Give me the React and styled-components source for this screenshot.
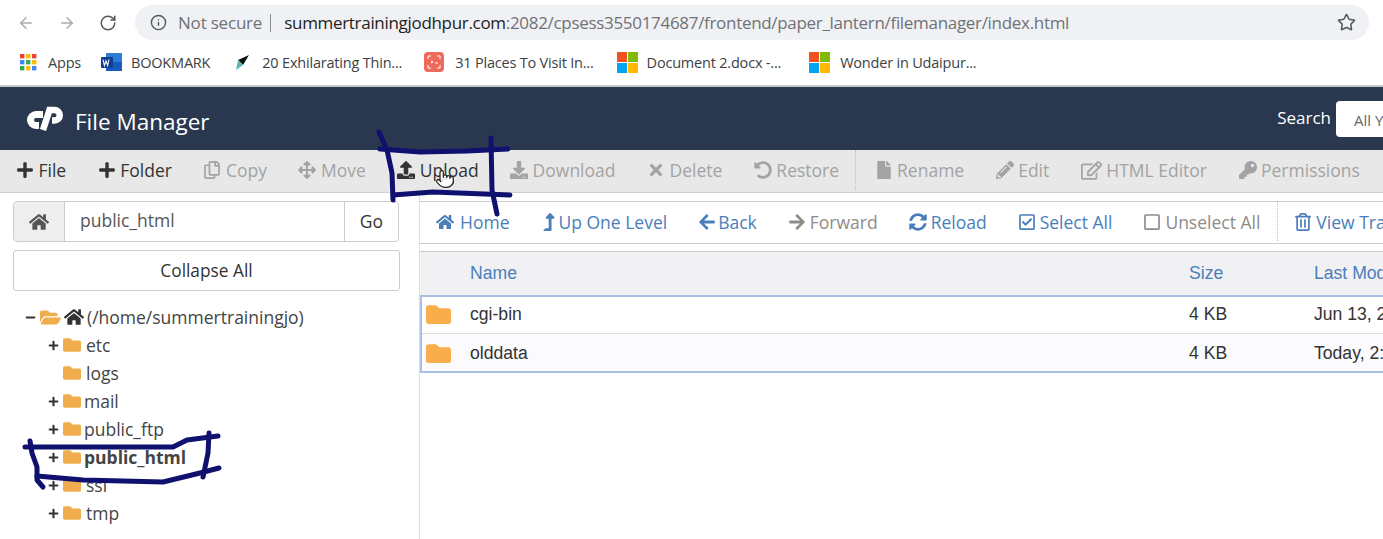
import React from 'react'
import styled, { createGlobalStyle } from 'styled-components';
import {
  FaPlus, FaRegCopy, FaArrowsAlt, FaUpload, FaDownload, FaTimes, FaUndoAlt, FaFile, FaPencilAlt,
  FaRegEdit, FaKey, FaHome, FaLevelUpAlt, FaArrowLeft, FaArrowRight, FaSyncAlt, FaRegCheckSquare,
  FaRegSquare, FaRegTrashAlt, FaFolder, FaFolderOpen, FaMinus
} from 'react-icons/fa';
import { ArrowLeft, ArrowRight, RotateCw, Info, Star, Pointer } from 'lucide-react';

const GlobalStyle = createGlobalStyle`
  html, body {
    margin: 0;
    padding: 0;
    background: #fff;
    overflow: hidden;
  }
`;

const Page = styled.div`
  position: relative;
  width: 1383px;
  height: 539px;
  overflow: hidden;
  font-family: "Open Sans", sans-serif;
  color: #333;
`;

const AddressRow = styled.div`
  display: flex;
  align-items: center;
  height: 35px;
  padding: 5px 14px 5px 17px;
`;

const NavGlyph = styled.span`
  display: flex;
  width: 18px;
  margin-right: ${p => p.$gap}px;
  color: ${p => p.$color};
`;

const AddressBar = styled.div`
  flex: 1;
  display: flex;
  align-items: center;
  height: 35px;
  padding: 0 13px 0 15px;
  border-radius: 18px;
  background: #f0f1f4;
  font-size: 17px;
  color: #6f7276;
`;

const NotSecure = styled.span`
  margin-left: 11px;
  letter-spacing: -0.2px;
`;

const AddressDivider = styled.span`
  width: 1px;
  height: 18px;
  margin: 0 13px 0 8px;
  background: #8a8d91;
`;

const Url = styled.span`
  flex: 1;
  white-space: nowrap;
  letter-spacing: -0.31px;
  b {
    font-weight: 400;
    color: #222;
  }
`;

const BookmarkRow = styled.div`
  display: flex;
  align-items: center;
  height: 42px;
  padding: 0 0 6px 20px;
  border-bottom: 2px solid #c5c8cd;
  box-sizing: border-box;
`;

const Bookmark = styled.div`
  display: flex;
  align-items: center;
  gap: ${p => p.$gap}px;
  margin-right: ${p => p.$right}px;
  font-size: 14.5px;
  white-space: nowrap;
  color: #3c3f43;
  letter-spacing: -0.2px;
`;

const Header = styled.header`
  display: flex;
  align-items: center;
  height: 63px;
  padding: 0 0 0 26px;
  background: #29384f;
  color: #fff;
`;

const Title = styled.h1`
  flex: 1;
  margin: 0 0 0 12px;
  font-size: 22.5px;
  font-weight: 400;
  position: relative;
  top: 3px;
`;

const SearchLabel = styled.span`
  font-size: 17px;
  margin-right: 5px;
  position: relative;
  top: -1px;
`;

const SearchBox = styled.div`
  width: 47px;
  height: 36px;
  margin-top: 1px;
  padding: 9px 0 0 18px;
  box-sizing: border-box;
  background: #fff;
  border-radius: 4px 0 0 4px;
  font-size: 15px;
  color: #666;
  white-space: nowrap;
  overflow: hidden;
`;

const Toolbar = styled.div`
  display: flex;
  align-items: center;
  height: 43px;
  padding: 0 0 2px 16px;
  box-sizing: border-box;
  background: #e8e8e8;
  border-bottom: 1px solid #cfcfcf;
  white-space: nowrap;
  overflow: hidden;
`;

const ToolButton = styled.span`
  display: inline-flex;
  align-items: center;
  gap: 4.5px;
  margin-right: 31.5px;
  font-size: 17.5px;
  color: ${p => (p.$off ? '#a3a3a3' : '#333')};
  svg {
    flex: none;
    font-size: ${p => p.$icon || 18}px;
  }
`;

const ToolDivider = styled.span`
  align-self: stretch;
  width: 0;
  margin: 0 19px 0 -16px;
  border-left: 1px dotted #bbb;
`;

const Main = styled.div`
  display: flex;
  height: 346px;
`;

const Sidebar = styled.aside`
  flex: none;
  width: 420px;
  box-sizing: border-box;
  padding: 8px 19px 0 13px;
  border-right: 1px solid #ddd;
`;

const PathForm = styled.div`
  display: flex;
  align-items: stretch;
  width: 386px;
  height: 41px;
  box-sizing: border-box;
  border: 1px solid #ccc;
  border-radius: 4px;
  font-size: 17.5px;
`;

const PathHome = styled.span`
  display: flex;
  align-items: center;
  justify-content: center;
  width: 50px;
  background: #eee;
  border-right: 1px solid #ccc;
  border-radius: 4px 0 0 4px;
  color: #555;
  font-size: 20px;
`;

const PathInput = styled.span`
  flex: 1;
  padding: 6px 0 0 15px;
  color: #555;
`;

const GoButton = styled.span`
  width: 54px;
  padding-top: 7px;
  box-sizing: border-box;
  text-align: center;
  border-left: 1px solid #ccc;
`;

const CollapseButton = styled.div`
  width: 387px;
  height: 41px;
  margin-top: 8px;
  box-sizing: border-box;
  border: 1px solid #ccc;
  border-radius: 3px;
  text-align: center;
  font-size: 17.3px;
  line-height: 39px;
`;

const Tree = styled.ul`
  list-style: none;
  margin: 12px 0 0;
  padding: 0;
`;

const TreeRow = styled.li`
  display: flex;
  align-items: center;
  height: 28px;
  padding-left: ${p => (p.$root ? 12 : 35)}px;
  font-size: 17.5px;
  font-weight: ${p => (p.$active ? 700 : 400)};
  color: #444;
`;

const Toggle = styled.span`
  display: flex;
  flex: none;
  width: 15px;
  font-size: 11px;
  color: #333;
`;

const FolderGlyph = styled.span`
  display: flex;
  flex: none;
  color: #f0ad4e;
  font-size: ${p => (p.$open ? 21 : 18)}px;
`;

const RootHome = styled.span`
  display: flex;
  margin: 0 3px 0 3px;
  font-size: 20px;
  color: #333;
`;

const TreeLabel = styled.span`
  margin-left: ${p => p.$left}px;
`;

const Content = styled.section`
  flex: 1;
  min-width: 0;
  padding-top: 8px;
`;

const NavBar = styled.div`
  display: flex;
  align-items: center;
  height: 43px;
  padding: 0 0 2px 16px;
  box-sizing: border-box;
  border-top: 1px solid #ccc;
  border-bottom: 1px solid #ccc;
  white-space: nowrap;
  overflow: hidden;
`;

const NavLink = styled.span`
  display: inline-flex;
  align-items: center;
  gap: ${p => p.$gap}px;
  margin-right: 31px;
  font-size: 17.5px;
  color: ${p => (p.$off ? '#8f8b88' : '#4a7ebb')};
  svg {
    flex: none;
    font-size: 18px;
  }
`;

const NavDivider = styled.span`
  align-self: stretch;
  width: 0;
  margin: 0 16px 0 -14px;
  border-left: 1px dotted #bbb;
`;

const FileTable = styled.div`
  margin-top: 7px;
  font-family: "Liberation Sans", Arial, sans-serif;
  font-size: 17.6px;
`;

const HeadRow = styled.div`
  display: grid;
  grid-template-columns: 50px 719px 125px 200px;
  align-items: center;
  height: 44px;
  box-sizing: border-box;
  background: #f1f1f3;
  border-top: 1px solid #ccc;
  color: #4a7ebb;
  white-space: nowrap;
`;

const RowGroup = styled.div`
  border: 2px solid #a9c0e2;
  border-right: 0;
`;

const FileRow = styled.div`
  display: grid;
  grid-template-columns: 48px 719px 125px 200px;
  align-items: center;
  height: ${p => (p.$first ? 36 : 38)}px;
  padding: ${p => (p.$first ? '0 0 2px' : '1px 0 0')};
  box-sizing: border-box;
  border-top: ${p => (p.$first ? '0' : '1px solid #ddd')};
  background: ${p => (p.$first ? '#fff' : '#fbfbfd')};
  color: #333;
  white-space: nowrap;
  svg {
    font-size: 25px;
    color: #f7ae4b;
    margin: 0 0 0 4px;
  }
`;

const Scribble = styled.svg`
  position: absolute;
  inset: 0;
  pointer-events: none;
`;

const HandCursor = styled.span`
  position: absolute;
  left: 435px;
  top: 169px;
  display: flex;
`;

const toolItems = [
  [FaPlus, 'File'], [FaPlus, 'Folder'], [FaRegCopy, 'Copy', true], [FaArrowsAlt, 'Move', true],
  [FaUpload, 'Upload'], [FaDownload, 'Download', true], [FaTimes, 'Delete', true], [FaUndoAlt, 'Restore', true],
  null,
  [FaFile, 'Rename', true], [FaPencilAlt, 'Edit', true], [FaRegEdit, 'HTML Editor', true, 21], [FaKey, 'Permissions', true],
];

const navItems = [
  [FaHome, 'Home', false, 6], [FaLevelUpAlt, 'Up One Level', false, 0], [FaArrowLeft, 'Back', false, 2],
  [FaArrowRight, 'Forward', true, 4], [FaSyncAlt, 'Reload', false, 4], [FaRegCheckSquare, 'Select All', false, 4],
  [FaRegSquare, 'Unselect All', true, 4],
  null,
  [FaRegTrashAlt, 'View Trash', false, 4],
];

const treeItems = [
  { name: 'etc', left: 5, plus: true },
  { name: 'logs', left: 5 },
  { name: 'mail', left: 3, plus: true },
  { name: 'public_ftp', left: 3, plus: true },
  { name: 'public_html', left: 3, plus: true, active: true },
  { name: 'ssl', left: 5, plus: true },
  { name: 'tmp', left: 5, plus: true },
];

const AppsIcon = () => (
  <svg width="17" height="17" viewBox="0 0 17 17">
    {['#ea4335', '#fbbc05', '#ea4335', '#4285f4', '#34a853', '#fbbc05', '#34a853', '#fbbc05', '#4285f4'].map((c, i) => (
      <rect key={i} x={(i % 3) * 6} y={Math.floor(i / 3) * 6} width="4.4" height="4.4" fill={c} />
    ))}
  </svg>
);

const WordIcon = () => (
  <svg width="21" height="20" viewBox="0 0 21 20">
    <rect x="5" y="1" width="16" height="18" rx="1" fill="#2b7cd3" />
    <rect x="5" y="10" width="16" height="9" fill="#185abd" />
    <rect x="0" y="5" width="12" height="11" rx="1" fill="#103f91" />
    <path d="M2 7.5l1.4 6 1.6-4.6 1.6 4.6 1.4-6" fill="none" stroke="#fff" strokeWidth="1.1" />
  </svg>
);

const ArrowMark = () => (
  <svg width="15" height="17" viewBox="0 0 15 17">
    <path d="M14 1L3 6l5 5z" fill="#111" />
    <path d="M3 6l5 5-7 5z" fill="#5fb4b8" />
  </svg>
);

const PlacesIcon = () => (
  <svg width="22" height="22" viewBox="0 0 22 22">
    <rect x="1" y="1" width="20" height="20" rx="4" fill="#ee6a5a" />
    <path d="M5 8V5h3M14 5h3v3M17 14v3h-3M8 17H5v-3" fill="none" stroke="#fff" strokeWidth="1" />
    <path d="M8 10l2 1-2 1M12 12h3" fill="none" stroke="#fff" strokeWidth="1" />
  </svg>
);

const WindowsIcon = () => (
  <svg width="21" height="21" viewBox="0 0 21 21">
    <rect width="10" height="10" fill="#f25022" />
    <rect x="11" width="10" height="10" fill="#7fba00" />
    <rect y="11" width="10" height="10" fill="#00a4ef" />
    <rect x="11" y="11" width="10" height="10" fill="#ffb900" />
  </svg>
);

const CpanelLogo = () => (
  <svg width="37" height="26" viewBox="0 0 37 26">
    <path d="M17 8.500H10a5.500 5.500 0 0 0 0 11H13" fill="none" stroke="#fff" strokeWidth="7" />
    <path d="M17 24L23.500 4h5a5.250 5.250 0 0 1 0 10.500H26" fill="none" stroke="#fff" strokeWidth="6.500" />
  </svg>
);

const App = () => (
  <Page>
    <GlobalStyle />
    <AddressRow>
      <NavGlyph $gap={23} $color="#a9abb0"><ArrowLeft size={22} /></NavGlyph>
      <NavGlyph $gap={23} $color="#a9abb0"><ArrowRight size={22} /></NavGlyph>
      <NavGlyph $gap={18} $color="#55585c"><RotateCw size={20} /></NavGlyph>
      <AddressBar>
        <Info size={17} color="#55585c" />
        <NotSecure>Not secure</NotSecure>
        <AddressDivider />
        <Url><b>summertrainingjodhpur.com</b>:2082/cpsess3550174687/frontend/paper_lantern/filemanager/index.html</Url>
        <Star size={19} color="#55585c" />
      </AddressBar>
    </AddressRow>
    <BookmarkRow>
      <Bookmark $gap={11} $right={20}><AppsIcon />Apps</Bookmark>
      <Bookmark $gap={9} $right={25}><WordIcon />BOOKMARK</Bookmark>
      <Bookmark $gap={12} $right={21}><ArrowMark />20 Exhilarating Thin...</Bookmark>
      <Bookmark $gap={10} $right={23}><PlacesIcon />31 Places To Visit In...</Bookmark>
      <Bookmark $gap={9} $right={28}><WindowsIcon />Document 2.docx -...</Bookmark>
      <Bookmark $gap={10} $right={0}><WindowsIcon />Wonder in Udaipur...</Bookmark>
    </BookmarkRow>
    <Header>
      <CpanelLogo />
      <Title>File Manager</Title>
      <SearchLabel>Search</SearchLabel>
      <SearchBox>All Your Files</SearchBox>
    </Header>
    <Toolbar>
      {toolItems.map((item, i) => {
        if (!item) return <ToolDivider key={i} />;
        const [Icon, label, off, icon] = item;
        return <ToolButton key={label} $off={off} $icon={icon}><Icon />{label}</ToolButton>;
      })}
    </Toolbar>
    <Main>
      <Sidebar>
        <PathForm>
          <PathHome><FaHome /></PathHome>
          <PathInput>public_html</PathInput>
          <GoButton>Go</GoButton>
        </PathForm>
        <CollapseButton>Collapse All</CollapseButton>
        <Tree>
          <TreeRow $root>
            <Toggle><FaMinus /></Toggle>
            <FolderGlyph $open><FaFolderOpen /></FolderGlyph>
            <RootHome><FaHome /></RootHome>
            (/home/summertrainingjo)
          </TreeRow>
          {treeItems.map(item => (
            <TreeRow key={item.name} $active={item.active}>
              <Toggle>{item.plus && <FaPlus />}</Toggle>
              <FolderGlyph><FaFolder /></FolderGlyph>
              <TreeLabel $left={item.left}>{item.name}</TreeLabel>
            </TreeRow>
          ))}
        </Tree>
      </Sidebar>
      <Content>
        <NavBar>
          {navItems.map((item, i) => {
            if (!item) return <NavDivider key={i} />;
            const [Icon, label, off, gap] = item;
            return <NavLink key={label} $off={off} $gap={gap}><Icon />{label}</NavLink>;
          })}
        </NavBar>
        <FileTable>
          <HeadRow>
            <span />
            <span>Name</span>
            <span>Size</span>
            <span>Last Modified</span>
          </HeadRow>
          <RowGroup>
            <FileRow $first>
              <FaFolder />
              <span>cgi-bin</span>
              <span>4 KB</span>
              <span>Jun 13, 2019</span>
            </FileRow>
            <FileRow>
              <FaFolder />
              <span>olddata</span>
              <span>4 KB</span>
              <span>Today, 2:15 PM</span>
            </FileRow>
          </RowGroup>
        </FileTable>
      </Content>
    </Main>
    <HandCursor><Pointer size={20} color="#222" fill="#fff" strokeWidth={1.5} /></HandCursor>
    <Scribble width="1383" height="539" viewBox="0 0 1383 539" fill="none" stroke="#10106e" strokeWidth="5" strokeLinecap="round" strokeLinejoin="round">
      <path d="M379 132L387 150L392 173L393 200" />
      <path d="M380 149L420 152L467 151L508 149" />
      <path d="M491 138L492 190L497 214" />
      <path d="M393 195L433 192L510 195" />
      <path d="M25 447L173 447L187 440L218 436" />
      <path d="M30 441L32 453L37 467L37 480L43 487" />
      <path d="M37 476L83 480L163 482L200 473L219 468" />
      <path d="M209 433L208 453L203 477" />
    </Scribble>
  </Page>
);

export default App
